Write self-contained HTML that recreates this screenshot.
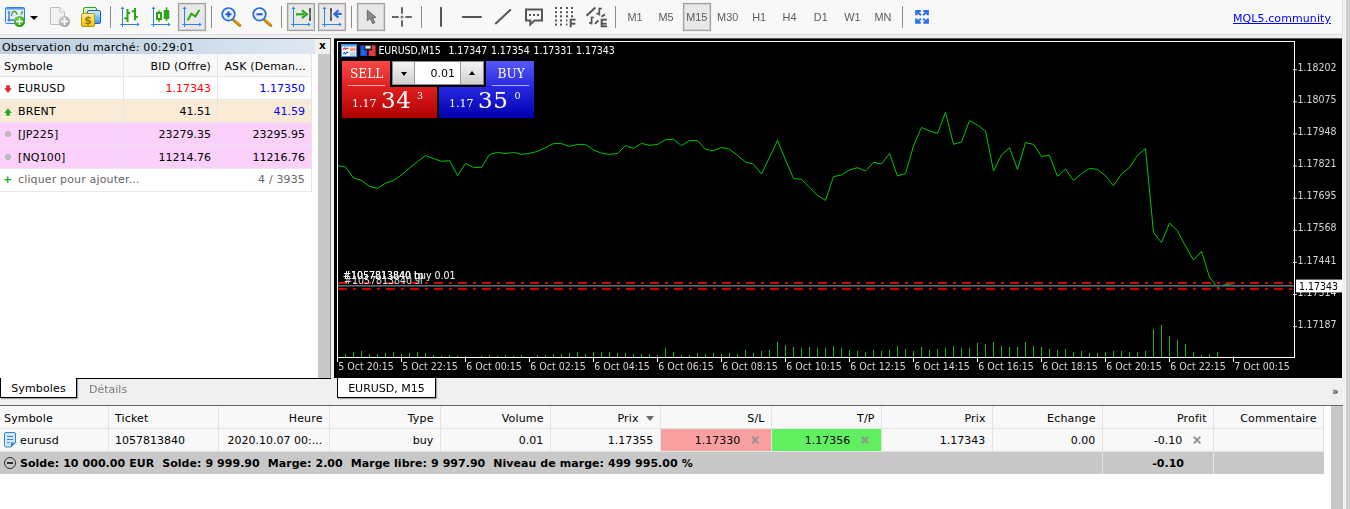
<!DOCTYPE html>
<html lang="fr"><head><meta charset="utf-8"><title>MetaTrader Web Terminal</title>
<style>
*{box-sizing:border-box;margin:0;padding:0}
html,body{width:1350px;height:509px;overflow:hidden}
body{position:relative;background:#f0f0f0;font-family:"DejaVu Sans","Liberation Sans",sans-serif;font-size:11px;color:#000;letter-spacing:.15px}
.abs{position:absolute}
#toolbar{left:0;top:0;width:1343px;height:35px;background:#f8f8f8;border-bottom:1px solid #dcdcdc;border-right:1px solid #dcdcdc}
#rstrip{left:1343px;top:0;width:7px;height:509px;background:linear-gradient(90deg,#f6f6f6,#f2f2f2 3px,#d6d3d0 3px,#d0d0d0 4px)}
#chart{position:absolute;left:334px;top:38px}
#mw{left:0;top:38px;width:331px;height:340px;background:#fff;border-top:1px solid #555;border-right:1px solid #888}
.sep{position:absolute;top:6px;width:1px;height:21px;background:#a0a0a0}
.tf{position:absolute;top:10px;font-family:"Liberation Sans",sans-serif;font-size:11.5px;color:#444;letter-spacing:0}
</style></head><body>
<div class="abs" id="toolbar"></div>
<svg class="abs" style="left:0;top:0;will-change:transform;letter-spacing:0" width="1342" height="34" viewBox="0 0 1342 34"><defs>
<radialGradient id="gp" cx=".4" cy=".3" r=".8"><stop offset="0" stop-color="#7ad84a"/><stop offset="1" stop-color="#1e8a0a"/></radialGradient>
<radialGradient id="gg" cx=".4" cy=".3" r=".8"><stop offset="0" stop-color="#d0d0d0"/><stop offset="1" stop-color="#a0a0a0"/></radialGradient>
<linearGradient id="gy" x1="0" y1="0" x2="0" y2="1"><stop offset="0" stop-color="#fdf0b0"/><stop offset=".6" stop-color="#ffd82a"/><stop offset="1" stop-color="#f0c000"/></linearGradient>
<linearGradient id="gb" x1="0" y1="0" x2="0" y2="1"><stop offset="0" stop-color="#d8f0ff"/><stop offset="1" stop-color="#28a0f0"/></linearGradient>
<linearGradient id="ggr" x1="0" y1="0" x2="0" y2="1"><stop offset="0" stop-color="#e8f8d8"/><stop offset="1" stop-color="#98d870"/></linearGradient>
<radialGradient id="gl" cx=".5" cy=".4" r=".7"><stop offset="0" stop-color="#fff"/><stop offset="1" stop-color="#cfe6fb"/></radialGradient>
<linearGradient id="gbar" x1="0" y1="0" x2="0" y2="1"><stop offset="0" stop-color="#444"/><stop offset=".5" stop-color="#777"/><stop offset="1" stop-color="#444"/></linearGradient>
</defs><rect x="178.5" y="3.5" width="27" height="27" fill="#e8e8e8" stroke="#a2a2a2" stroke-width="1.2"/><rect x="179.5" y="4.5" width="25" height="25" fill="none" stroke="#d0d0d0" stroke-width="1"/><rect x="287.5" y="3.5" width="27" height="27" fill="#e8e8e8" stroke="#a2a2a2" stroke-width="1.2"/><rect x="288.5" y="4.5" width="25" height="25" fill="none" stroke="#d0d0d0" stroke-width="1"/><rect x="318.5" y="3.5" width="27" height="27" fill="#e8e8e8" stroke="#a2a2a2" stroke-width="1.2"/><rect x="319.5" y="4.5" width="25" height="25" fill="none" stroke="#d0d0d0" stroke-width="1"/><rect x="357.5" y="3.5" width="27" height="27" fill="#e8e8e8" stroke="#a2a2a2" stroke-width="1.2"/><rect x="358.5" y="4.5" width="25" height="25" fill="none" stroke="#d0d0d0" stroke-width="1"/><rect x="683.5" y="3.5" width="27" height="27" fill="#e8e8e8" stroke="#a2a2a2" stroke-width="1.2"/><rect x="684.5" y="4.5" width="25" height="25" fill="none" stroke="#d0d0d0" stroke-width="1"/><rect x="110" y="6" width="1" height="22" fill="#8c8c8c"/><rect x="211" y="6" width="1" height="22" fill="#8c8c8c"/><rect x="281" y="6" width="1" height="22" fill="#8c8c8c"/><rect x="351" y="6" width="1" height="22" fill="#8c8c8c"/><rect x="421" y="6" width="1" height="22" fill="#8c8c8c"/><rect x="615" y="6" width="1" height="22" fill="#8c8c8c"/><rect x="902" y="6" width="1" height="22" fill="#8c8c8c"/><rect x="5.5" y="7.5" width="19" height="16" rx="1" fill="#e4eefa" stroke="#2f80ec"/><rect x="6" y="8" width="18" height="1.6" fill="#2f80ec" opacity=".75"/><path d="M9 12V21.5M7.5 20H14" stroke="#3a78d8" stroke-width="1.4" fill="none"/><path d="M9 10.8l1.6 2h-3.2z" fill="#3a78d8"/><path d="M11.5 16c.3-3.5 1.5-4.6 2.9-4.6 1.4 0 2.2 1.3 2.7 3.2M21 14.5c.8-1.2 1.2-2.2 1.5-3.5" stroke="#2aa514" stroke-width="1.2" fill="none"/><circle cx="19.5" cy="21.5" r="5.5" fill="url(#gp)"/><path d="M19.5 18v7M16 21.5h7" stroke="#fff" stroke-width="1.5"/><path d="M30 16h8l-4 4z" fill="#000"/><path d="M50.5 7.5h9.5l4.5 4.5v12.5h-14z" fill="#f2f2f2" stroke="#bcbcbc"/><path d="M60 7.5v4.5h4.5" fill="#fff" stroke="#bcbcbc"/><circle cx="64.5" cy="21.5" r="5.5" fill="url(#gg)"/><path d="M64.5 18v7M61 21.5h7" stroke="#fff" stroke-width="1.5"/><rect x="83.5" y="7.5" width="13" height="13" rx="1.5" fill="url(#ggr)" stroke="#28a828"/><rect x="87.5" y="10.5" width="13" height="13" rx="1.5" fill="url(#gb)" stroke="#1858c8"/><rect x="81.5" y="13.5" width="13" height="13" rx="1.5" fill="url(#gy)" stroke="#b89010"/><text x="88" y="24.3" text-anchor="middle" font-family="DejaVu Sans, Liberation Sans, sans-serif" font-weight="bold" font-size="11" fill="#9a7008">$</text><g stroke="#2f80ec" stroke-width="1" fill="#2f80ec"><path d="M122.5 8V27" fill="none"/><path d="M120.2 24.5H138.5" fill="none"/><path d="M122.5 6.5l2 2.6h-4z" stroke="none"/><path d="M139.7 24.5l-2.6 2v-4z" stroke="none"/></g><g stroke="#2aa514" stroke-width="2" fill="none"><path d="M127.5 9V22M127.5 13h2.7M127.5 18.2h-3.3M135 8V20.2M135 11.2h-3.2M135 17h2.8"/></g><g stroke="#2f80ec" stroke-width="1" fill="#2f80ec"><path d="M153.5 8V27" fill="none"/><path d="M151.2 24.5H169.5" fill="none"/><path d="M153.5 6.5l2 2.6h-4z" stroke="none"/><path d="M170.7 24.5l-2.6 2v-4z" stroke="none"/></g><rect x="157" y="13" width="4" height="6" fill="#fff" stroke="#2aa514" stroke-width="2"/><path d="M159 10.5V12M159 20v1.8" stroke="#2aa514" stroke-width="1.6"/><rect x="163.7" y="10" width="5.6" height="9" rx=".8" fill="#2aa514"/><path d="M166.5 7.3V21" stroke="#2aa514" stroke-width="1.6"/><g stroke="#2f80ec" stroke-width="1" fill="#2f80ec"><path d="M184.5 8V27" fill="none"/><path d="M182.2 24.5H200.5" fill="none"/><path d="M184.5 6.5l2 2.6h-4z" stroke="none"/><path d="M201.7 24.5l-2.6 2v-4z" stroke="none"/></g><path d="M187.7 20.3L191.5 13.8L195.3 16.6L199.3 10" stroke="#2aa514" stroke-width="2" fill="none"/><path d="M233.1 19.6L239.7 25.4" stroke="#b8860b" stroke-width="3.2" stroke-linecap="round"/><path d="M233.7 19.4L239.9 24.8" stroke="#e0b030" stroke-width="1"/><circle cx="228.5" cy="14.3" r="6.3" fill="url(#gl)" stroke="#2468e8" stroke-width="1.7"/><path d="M225.5 14.3h6" stroke="#1c50e0" stroke-width="2"/><path d="M228.5 11.3v6" stroke="#1c50e0" stroke-width="2"/><path d="M264.1 19.6L270.7 25.4" stroke="#b8860b" stroke-width="3.2" stroke-linecap="round"/><path d="M264.7 19.4L270.9 24.8" stroke="#e0b030" stroke-width="1"/><circle cx="259.5" cy="14.3" r="6.3" fill="url(#gl)" stroke="#2468e8" stroke-width="1.7"/><path d="M256.5 14.3h6" stroke="#1c50e0" stroke-width="2"/><g stroke="#2f80ec" stroke-width="1" fill="#2f80ec"><path d="M293.5 8V27" fill="none"/><path d="M291.2 24.5H309.5" fill="none"/><path d="M293.5 6.5l2 2.6h-4z" stroke="none"/><path d="M310.7 24.5l-2.6 2v-4z" stroke="none"/></g><path d="M296 14.3h8" stroke="#2aa514" stroke-width="2.2"/><path d="M302 10.4l4.8 3.9-4.8 3.9" stroke="#2aa514" stroke-width="2.2" fill="none"/><rect x="309" y="8" width="2" height="13" rx="1" fill="url(#gbar)"/><g stroke="#2f80ec" stroke-width="1" fill="#2f80ec"><path d="M324.5 8V27" fill="none"/><path d="M322.2 24.5H340.5" fill="none"/><path d="M324.5 6.5l2 2.6h-4z" stroke="none"/><path d="M341.7 24.5l-2.6 2v-4z" stroke="none"/></g><rect x="330" y="8" width="2" height="13" rx="1" fill="url(#gbar)"/><path d="M335.5 13.9h6.2" stroke="#2a68f0" stroke-width="2.2"/><path d="M338.4 10.2l-4 3.7 4 3.7" stroke="#2a68f0" stroke-width="2.2" fill="none"/><path d="M367.3 10V20.8L370.2 18.4L372.6 23.8L374.9 22.7L372.6 17.6L376 17.4z" fill="#8a8a8a" stroke="#5a5a5a" stroke-width=".8"/><g stroke="#666" stroke-width="2"><path d="M402 7.2v6.5M402 20.3v6.5M392 17h6.6M405.3 17h6.5"/></g><circle cx="402" cy="17" r="1.6" fill="#777"/><g stroke="#555" stroke-width="2" fill="none" stroke-linecap="round"><path d="M441 7.8V26"/><path d="M462.8 17H481"/><path d="M495.8 23.4L510.2 10"/></g><path d="M526 9.4h16v11.2h-7.5l-4.2 3.8v-3.8H526z" fill="none" stroke="#555" stroke-width="2"/><g fill="#555"><rect x="529" y="14" width="2" height="2"/><rect x="533" y="14" width="2" height="2"/><rect x="537" y="14" width="2" height="2"/></g><g fill="#555"><rect x="555" y="7.0" width="2" height="2"/><rect x="555" y="11.2" width="2" height="2"/><rect x="555" y="15.3" width="2" height="2"/><rect x="555" y="19.5" width="2" height="2"/><rect x="555" y="23.6" width="2" height="2"/><rect x="560" y="7.0" width="2" height="2"/><rect x="560" y="11.2" width="2" height="2"/><rect x="560" y="15.3" width="2" height="2"/><rect x="560" y="19.5" width="2" height="2"/><rect x="560" y="23.6" width="2" height="2"/><rect x="566" y="7.0" width="2" height="2"/><rect x="566" y="11.2" width="2" height="2"/><rect x="566" y="15.3" width="2" height="2"/><rect x="566" y="19.5" width="1.4" height="2"/><rect x="566" y="23.6" width="1.4" height="2"/><rect x="571" y="7.0" width="2" height="2"/><rect x="571" y="11.2" width="2" height="2"/><rect x="571" y="15.3" width="2" height="2"/></g><text x="569.3" y="26.7" font-family="Liberation Sans, sans-serif" font-weight="bold" font-size="10.5" fill="#555" stroke="#555" stroke-width=".4">F</text><g stroke="#555" stroke-width="2" fill="none"><path d="M586.5 15.7L595.4 7.4"/><path d="M594.9 23.9L598.4 20.4M601.5 16.8L604.9 14.4"/><path d="M599.3 7.7V15.4M598.6 8.6H601.8M600 13.7H596.4" stroke-width="1.7"/><path d="M591.6 16.5V24.5M590.9 17.5H593.8M592.3 22.8H589" stroke-width="1.7"/></g><text x="600.3" y="26.7" font-family="Liberation Sans, sans-serif" font-weight="bold" font-size="10.5" fill="#555" stroke="#555" stroke-width=".5">E</text><text x="635" y="20.8" text-anchor="middle" font-family="Liberation Sans, sans-serif" font-size="10.9" fill="#5c5c5c">M1</text><text x="666" y="20.8" text-anchor="middle" font-family="Liberation Sans, sans-serif" font-size="10.9" fill="#5c5c5c">M5</text><text x="696.8" y="20.8" text-anchor="middle" font-family="Liberation Sans, sans-serif" font-size="10.9" fill="#5c5c5c">M15</text><text x="727.7" y="20.8" text-anchor="middle" font-family="Liberation Sans, sans-serif" font-size="10.9" fill="#5c5c5c">M30</text><text x="759.2" y="20.8" text-anchor="middle" font-family="Liberation Sans, sans-serif" font-size="10.9" fill="#5c5c5c">H1</text><text x="789.5" y="20.8" text-anchor="middle" font-family="Liberation Sans, sans-serif" font-size="10.9" fill="#5c5c5c">H4</text><text x="820.8" y="20.8" text-anchor="middle" font-family="Liberation Sans, sans-serif" font-size="10.9" fill="#5c5c5c">D1</text><text x="852.5" y="20.8" text-anchor="middle" font-family="Liberation Sans, sans-serif" font-size="10.9" fill="#5c5c5c">W1</text><text x="883" y="20.8" text-anchor="middle" font-family="Liberation Sans, sans-serif" font-size="10.9" fill="#5c5c5c">MN</text><g fill="#2670f0"><path d="M915.2 10.1h5.6v2h-1.6l2.4 2.4l-1.4 1.4l-2.6 -2.6v2h-2.4z"/><path d="M928.9 10.1h-5.6v2h1.6l-2.4 2.4l1.4 1.4l2.6 -2.6v2h2.4z"/><path d="M915.2 23.7h5.6v-2h-1.6l2.4 -2.4l-1.4 -1.4l-2.6 2.6v-2h-2.4z"/><path d="M928.9 23.7h-5.6v-2h1.6l-2.4 -2.4l1.4 -1.4l2.6 2.6v-2h2.4z"/></g></svg><div class="abs" style="left:1233px;top:11px;line-height:15px;color:#00f;text-decoration:underline;font-size:11px;letter-spacing:.09px">MQL5.community</div>
<div class="abs" id="rstrip"></div>
<div class="abs" id="mw"><div class="abs" style="left:0;top:0;width:315px;height:15px;background:linear-gradient(90deg,#c2d2e3,#c6d6e6 40%,#dde8f3);line-height:17px;padding-left:2px;letter-spacing:.2px">Observation du marché: 00:29:01</div><div class="abs" style="left:315px;top:0;width:15px;height:15px;background:#f0f0f0;text-align:center;line-height:13px;font-weight:bold;font-size:10.5px;letter-spacing:0">x</div><div class="abs" style="left:0;top:15px;width:312px;height:23px;background:#f8f8f8;border-bottom:1px solid #e4e4e4"></div><div class="abs" style="left:4px;top:17px;line-height:22px">Symbole</div><div class="abs" style="left:123px;top:17px;width:88px;text-align:right;line-height:22px">BID (Offre)</div><div class="abs" style="left:217px;top:17px;width:89px;text-align:right;line-height:22px">ASK (Deman...</div><div class="abs" style="left:0;top:38px;width:312px;height:23px;background:#fff;border-bottom:1px solid #e8e8e8"></div><svg class="abs" style="left:4px;top:46px" width="8" height="8" viewBox="0 0 8 8"><path d="M2.2 0.3h3.6v2.9h2L4 7.9 0.2 3.2h2z" fill="#e62a32"/></svg><div class="abs" style="left:18px;top:39px;line-height:22px">EURUSD</div><div class="abs" style="left:123px;top:39px;width:88px;text-align:right;line-height:22px;letter-spacing:0;color:#f00">1.17343</div><div class="abs" style="left:217px;top:39px;width:88px;text-align:right;line-height:22px;letter-spacing:0;color:#00f">1.17350</div><div class="abs" style="left:0;top:61px;width:312px;height:23px;background:#faebd7;border-bottom:1px solid #e8e8e8"></div><svg class="abs" style="left:4px;top:69px" width="8" height="8" viewBox="0 0 8 8"><path d="M2.2 7.8h3.6V5h2L4 0.3 0.2 5h2z" fill="#22aa22"/></svg><div class="abs" style="left:18px;top:62px;line-height:22px">BRENT</div><div class="abs" style="left:123px;top:62px;width:88px;text-align:right;line-height:22px;letter-spacing:0;color:#000">41.51</div><div class="abs" style="left:217px;top:62px;width:88px;text-align:right;line-height:22px;letter-spacing:0;color:#00f">41.59</div><div class="abs" style="left:0;top:84px;width:312px;height:23px;background:#fbd0fb;border-bottom:1px solid #e8e8e8"></div><div class="abs" style="left:5px;top:92px;width:6px;height:6px;border-radius:3px;background:#c0c0c0;border:1px solid #aaa"></div><div class="abs" style="left:18px;top:85px;line-height:22px">[JP225]</div><div class="abs" style="left:123px;top:85px;width:88px;text-align:right;line-height:22px;letter-spacing:0;color:#000">23279.35</div><div class="abs" style="left:217px;top:85px;width:88px;text-align:right;line-height:22px;letter-spacing:0;color:#000">23295.95</div><div class="abs" style="left:0;top:107px;width:312px;height:23px;background:#fbd0fb;border-bottom:1px solid #e8e8e8"></div><div class="abs" style="left:5px;top:115px;width:6px;height:6px;border-radius:3px;background:#c0c0c0;border:1px solid #aaa"></div><div class="abs" style="left:18px;top:108px;line-height:22px">[NQ100]</div><div class="abs" style="left:123px;top:108px;width:88px;text-align:right;line-height:22px;letter-spacing:0;color:#000">11214.76</div><div class="abs" style="left:217px;top:108px;width:88px;text-align:right;line-height:22px;letter-spacing:0;color:#000">11216.76</div><div class="abs" style="left:0;top:130px;width:312px;height:23px;background:#fff;border-bottom:1px solid #e8e8e8"></div><div class="abs" style="left:3px;top:130px;line-height:22px;color:#2a2;font-weight:bold;font-size:11px;letter-spacing:0">+</div><div class="abs" style="left:18px;top:130.4px;line-height:22px;color:#666">cliquer pour ajouter...</div><div class="abs" style="left:217px;top:130.4px;width:88px;text-align:right;line-height:22px;color:#666">4 / 3935</div><div class="abs" style="left:123px;top:15px;width:1px;height:115px;background:#e4e4e4"></div><div class="abs" style="left:217px;top:15px;width:1px;height:115px;background:#e4e4e4"></div><div class="abs" style="left:311px;top:15px;width:1px;height:138px;background:#e4e4e4"></div><div class="abs" style="left:318px;top:15px;width:12px;height:324px;background:#c8c8c8"></div></div>
<svg id="chart" style="letter-spacing:0;will-change:transform" width="1008" height="340" viewBox="334 38 1008 340">
<rect x="334" y="38" width="1008" height="340" fill="#000"/><rect x="334" y="38" width="1008" height="1" fill="#5a5a5a"/>
<g fill="#20b820" shape-rendering="crispEdges"><rect x="345" y="353.6" width="1" height="3.4"/><rect x="353" y="352.0" width="1" height="5.0"/><rect x="361" y="350.6" width="1" height="6.4"/><rect x="369" y="353.6" width="1" height="3.4"/><rect x="377" y="353.6" width="1" height="3.4"/><rect x="385" y="352.6" width="1" height="4.4"/><rect x="393" y="351.6" width="1" height="5.4"/><rect x="401" y="353.6" width="1" height="3.4"/><rect x="409" y="352.6" width="1" height="4.4"/><rect x="417" y="351.6" width="1" height="5.4"/><rect x="425" y="352.6" width="1" height="4.4"/><rect x="433" y="354.6" width="1" height="2.4"/><rect x="441" y="355.6" width="1" height="1.4"/><rect x="449" y="354.6" width="1" height="2.4"/><rect x="457" y="355.6" width="1" height="1.4"/><rect x="465" y="355.6" width="1" height="1.4"/><rect x="481" y="355.6" width="1" height="1.4"/><rect x="489" y="354.6" width="1" height="2.4"/><rect x="497" y="355.6" width="1" height="1.4"/><rect x="505" y="354.6" width="1" height="2.4"/><rect x="513" y="355.6" width="1" height="1.4"/><rect x="521" y="354.6" width="1" height="2.4"/><rect x="537" y="354.6" width="1" height="2.4"/><rect x="545" y="354.6" width="1" height="2.4"/><rect x="553" y="353.6" width="1" height="3.4"/><rect x="561" y="353.6" width="1" height="3.4"/><rect x="569" y="352.6" width="1" height="4.4"/><rect x="577" y="351.6" width="1" height="5.4"/><rect x="585" y="353.6" width="1" height="3.4"/><rect x="593" y="351.6" width="1" height="5.4"/><rect x="601" y="351.6" width="1" height="5.4"/><rect x="609" y="351.6" width="1" height="5.4"/><rect x="617" y="352.6" width="1" height="4.4"/><rect x="625" y="352.6" width="1" height="4.4"/><rect x="633" y="353.6" width="1" height="3.4"/><rect x="641" y="353.6" width="1" height="3.4"/><rect x="649" y="353.6" width="1" height="3.4"/><rect x="657" y="354.6" width="1" height="2.4"/><rect x="665" y="347.6" width="1" height="9.4"/><rect x="673" y="351.6" width="1" height="5.4"/><rect x="681" y="354.6" width="1" height="2.4"/><rect x="689" y="355.0" width="1" height="2.0"/><rect x="697" y="352.6" width="1" height="4.4"/><rect x="705" y="353.6" width="1" height="3.4"/><rect x="713" y="352.6" width="1" height="4.4"/><rect x="721" y="353.6" width="1" height="3.4"/><rect x="729" y="352.6" width="1" height="4.4"/><rect x="737" y="353.6" width="1" height="3.4"/><rect x="745" y="350.0" width="1" height="7.0"/><rect x="753" y="352.6" width="1" height="4.4"/><rect x="761" y="350.6" width="1" height="6.4"/><rect x="769" y="350.0" width="1" height="7.0"/><rect x="777" y="341.6" width="1" height="15.4"/><rect x="785" y="344.6" width="1" height="12.4"/><rect x="793" y="346.6" width="1" height="10.4"/><rect x="801" y="347.6" width="1" height="9.4"/><rect x="809" y="346.6" width="1" height="10.4"/><rect x="817" y="347.6" width="1" height="9.4"/><rect x="825" y="347.6" width="1" height="9.4"/><rect x="833" y="345.6" width="1" height="11.4"/><rect x="841" y="347.6" width="1" height="9.4"/><rect x="849" y="350.0" width="1" height="7.0"/><rect x="857" y="351.0" width="1" height="6.0"/><rect x="865" y="351.6" width="1" height="5.4"/><rect x="873" y="350.0" width="1" height="7.0"/><rect x="881" y="351.0" width="1" height="6.0"/><rect x="889" y="350.0" width="1" height="7.0"/><rect x="897" y="345.6" width="1" height="11.4"/><rect x="905" y="349.0" width="1" height="8.0"/><rect x="913" y="351.0" width="1" height="6.0"/><rect x="921" y="346.6" width="1" height="10.4"/><rect x="929" y="350.0" width="1" height="7.0"/><rect x="937" y="348.6" width="1" height="8.4"/><rect x="945" y="347.6" width="1" height="9.4"/><rect x="953" y="345.6" width="1" height="11.4"/><rect x="961" y="347.6" width="1" height="9.4"/><rect x="969" y="347.6" width="1" height="9.4"/><rect x="977" y="342.6" width="1" height="14.4"/><rect x="985" y="343.6" width="1" height="13.4"/><rect x="993" y="341.6" width="1" height="15.4"/><rect x="1001" y="345.6" width="1" height="11.4"/><rect x="1009" y="346.6" width="1" height="10.4"/><rect x="1017" y="346.6" width="1" height="10.4"/><rect x="1025" y="341.6" width="1" height="15.4"/><rect x="1033" y="345.6" width="1" height="11.4"/><rect x="1041" y="346.6" width="1" height="10.4"/><rect x="1049" y="348.6" width="1" height="8.4"/><rect x="1057" y="350.0" width="1" height="7.0"/><rect x="1065" y="348.6" width="1" height="8.4"/><rect x="1073" y="351.6" width="1" height="5.4"/><rect x="1081" y="351.0" width="1" height="6.0"/><rect x="1089" y="352.6" width="1" height="4.4"/><rect x="1097" y="352.6" width="1" height="4.4"/><rect x="1105" y="351.6" width="1" height="5.4"/><rect x="1113" y="350.6" width="1" height="6.4"/><rect x="1121" y="350.6" width="1" height="6.4"/><rect x="1129" y="351.6" width="1" height="5.4"/><rect x="1137" y="351.6" width="1" height="5.4"/><rect x="1145" y="350.6" width="1" height="6.4"/><rect x="1153" y="328.6" width="1" height="28.4"/><rect x="1161" y="325.2" width="1" height="31.8"/><rect x="1169" y="335.6" width="1" height="21.4"/><rect x="1177" y="339.6" width="1" height="17.4"/><rect x="1185" y="343.6" width="1" height="13.4"/><rect x="1193" y="351.6" width="1" height="5.4"/><rect x="1201" y="354.6" width="1" height="2.4"/><rect x="1209" y="353.6" width="1" height="3.4"/><rect x="1217" y="351.6" width="1" height="5.4"/><rect x="1233" y="355.6" width="1" height="1.4"/></g>
<polyline points="337.5,165.6 345.5,167.0 353.5,178.0 361.5,180.4 369.5,186.4 377.5,188.4 385.5,183.2 393.5,180.4 401.5,175.0 409.5,168.0 417.5,161.6 425.5,155.6 433.5,158.4 441.5,161.4 449.5,160.6 457.5,175.6 465.5,163.4 473.5,167.4 481.5,167.4 489.5,154.6 497.5,152.4 505.5,153.6 513.5,152.4 521.5,154.4 529.5,153.4 537.5,151.4 545.5,147.6 553.5,143.6 561.5,143.6 569.5,146.4 577.5,144.4 585.5,144.4 593.5,150.0 601.5,153.2 609.5,154.4 617.5,153.4 625.5,145.6 633.5,148.4 641.5,143.4 649.5,145.4 657.5,144.4 665.5,139.6 673.5,139.4 681.5,145.6 689.5,140.6 697.5,140.6 705.5,149.4 713.5,150.6 721.5,147.4 729.5,149.4 737.5,155.4 745.5,162.0 753.5,164.4 761.5,174.0 769.5,157.4 777.5,140.4 785.5,160.0 793.5,178.4 801.5,179.4 809.5,187.4 817.5,195.4 825.5,200.4 833.5,176.6 841.5,175.0 849.5,170.0 857.5,167.6 865.5,171.0 873.5,162.4 881.5,164.0 889.5,153.6 897.5,176.0 905.5,173.4 913.5,146.0 921.5,127.4 929.5,131.0 937.5,133.4 945.5,112.4 953.5,144.4 961.5,142.0 969.5,120.6 977.5,125.0 985.5,131.0 993.5,171.0 1001.5,155.0 1009.5,147.6 1017.5,169.4 1025.5,142.6 1033.5,144.4 1041.5,156.4 1049.5,155.4 1057.5,176.4 1065.5,169.0 1073.5,180.6 1081.5,173.8 1089.5,168.4 1097.5,169.4 1105.5,175.8 1113.5,185.6 1121.5,174.0 1129.5,167.4 1137.5,155.4 1145.5,148.6 1153.5,232.4 1161.5,242.6 1169.5,223.0 1177.5,231.0 1185.5,246.0 1193.5,260.0 1201.5,251.4 1209.5,277.0 1217.5,287.6 1225.5,284.4 1233.5,285.4" fill="none" stroke="#00c800" stroke-width="1" stroke-linejoin="round"/>
<g stroke-width="2" fill="none">
<line x1="338" y1="283" x2="1294" y2="283" stroke="#c21400" stroke-dasharray="9 6 3 6"/>
<line x1="338" y1="289" x2="1294" y2="289" stroke="#cc0000" stroke-dasharray="9 6 3 6"/>
</g>
<rect x="338" y="285" width="956" height="1" fill="#5e6878"/><rect x="338" y="286" width="956" height="1" fill="#39414c"/>
<g fill="#fff" shape-rendering="crispEdges">
<rect x="337" y="41" width="958" height="1"/><rect x="337" y="357" width="958" height="1"/>
<rect x="337" y="41" width="1" height="317"/><rect x="1294" y="41" width="1" height="317"/>
<rect x="337" y="357" width="1" height="5"/><rect x="401" y="357" width="1" height="5"/><rect x="465" y="357" width="1" height="5"/><rect x="529" y="357" width="1" height="5"/><rect x="593" y="357" width="1" height="5"/><rect x="657" y="357" width="1" height="5"/><rect x="721" y="357" width="1" height="5"/><rect x="785" y="357" width="1" height="5"/><rect x="849" y="357" width="1" height="5"/><rect x="913" y="357" width="1" height="5"/><rect x="977" y="357" width="1" height="5"/><rect x="1041" y="357" width="1" height="5"/><rect x="1105" y="357" width="1" height="5"/><rect x="1169" y="357" width="1" height="5"/><rect x="1233" y="357" width="1" height="5"/></g>
<g font-family="DejaVu Sans Condensed, DejaVu Sans, Liberation Sans, sans-serif" font-size="10.5" fill="#d4d4d4"><text x="338.3" y="370.2">5 Oct 20:15</text><text x="402.3" y="370.2">5 Oct 22:15</text><text x="466.3" y="370.2">6 Oct 00:15</text><text x="530.3" y="370.2">6 Oct 02:15</text><text x="594.3" y="370.2">6 Oct 04:15</text><text x="658.3" y="370.2">6 Oct 06:15</text><text x="722.3" y="370.2">6 Oct 08:15</text><text x="786.3" y="370.2">6 Oct 10:15</text><text x="850.3" y="370.2">6 Oct 12:15</text><text x="914.3" y="370.2">6 Oct 14:15</text><text x="978.3" y="370.2">6 Oct 16:15</text><text x="1042.3" y="370.2">6 Oct 18:15</text><text x="1106.3" y="370.2">6 Oct 20:15</text><text x="1170.3" y="370.2">6 Oct 22:15</text><text x="1234.3" y="370.2">7 Oct 00:15</text><rect x="1293" y="69.20" width="4" height="1" fill="#ddd"/><text x="1297.4" y="70.70">1.18202</text><rect x="1293" y="101.32" width="4" height="1" fill="#ddd"/><text x="1297.4" y="102.85">1.18075</text><rect x="1293" y="133.44" width="4" height="1" fill="#ddd"/><text x="1297.4" y="135.00">1.17948</text><rect x="1293" y="165.56" width="4" height="1" fill="#ddd"/><text x="1297.4" y="167.15">1.17821</text><rect x="1293" y="197.68" width="4" height="1" fill="#ddd"/><text x="1297.4" y="199.30">1.17695</text><rect x="1293" y="229.80" width="4" height="1" fill="#ddd"/><text x="1297.4" y="231.45">1.17568</text><rect x="1293" y="261.92" width="4" height="1" fill="#ddd"/><text x="1297.4" y="263.60">1.17441</text><rect x="1293" y="294.04" width="4" height="1" fill="#ddd"/><text x="1297.4" y="295.75">1.17314</text><rect x="1293" y="326.16" width="4" height="1" fill="#ddd"/><text x="1297.4" y="327.90">1.17187</text>
<text x="343" y="278.5" fill="#fff">#1057813840 buy 0.01</text>
<text x="343" y="279" fill="#fff">#1057813840 tp</text>
<text x="344" y="284" fill="#e0e0e0">#1057813840 sl</text>
</g>
<rect x="1296" y="279.6" width="46" height="12.8" fill="#fff"/>
<text x="1299" y="289.9" font-family="DejaVu Sans Condensed, DejaVu Sans, Liberation Sans, sans-serif" font-size="10.5" fill="#000">1.17343</text>
</svg>
<div class="abs" id="oc" style="left:0;top:0"><div class="abs" style="left:342px;top:61px;width:95px;height:57px;background:linear-gradient(#f84848,#e02020 45%,#b00000);clip-path:polygon(0 0,48px 0,48px 26px,95px 26px,95px 57px,0 57px)"></div><div class="abs" style="left:439px;top:61px;width:95px;height:57px;background:linear-gradient(#5858f8,#2828e0 45%,#0000b0);clip-path:polygon(47px 0,95px 0,95px 57px,0 57px,0 26px,47px 26px)"></div><div style="font-family:'DejaVu Serif','Liberation Serif',serif;color:#fff;letter-spacing:0;position:absolute;white-space:pre;left:350px;top:65px;font-size:13.5px;line-height:17px;font-family:'DejaVu Serif Condensed','DejaVu Serif','Liberation Serif',serif">SELL</div><div style="font-family:'DejaVu Serif','Liberation Serif',serif;color:#fff;letter-spacing:0;position:absolute;white-space:pre;left:497.5px;top:65px;font-size:13.5px;line-height:17px;font-family:'DejaVu Serif Condensed','DejaVu Serif','Liberation Serif',serif">BUY</div><div class="abs" style="left:348px;top:85px;width:37px;height:1px;background:#f8b0b0"></div><div class="abs" style="left:492px;top:85px;width:37px;height:1px;background:#b0b0f8"></div><div style="font-family:'DejaVu Serif','Liberation Serif',serif;color:#fff;letter-spacing:0;position:absolute;white-space:pre;left:352px;top:96.5px;font-size:11px;line-height:14px">1.17</div><div style="font-family:'DejaVu Serif','Liberation Serif',serif;color:#fff;letter-spacing:0;position:absolute;white-space:pre;left:381px;top:85.5px;font-size:23px;line-height:28px;letter-spacing:.6px">34</div><div style="font-family:'DejaVu Serif','Liberation Serif',serif;color:#fff;letter-spacing:0;position:absolute;white-space:pre;left:417px;top:88.5px;font-size:9.5px;line-height:13px">3</div><div style="font-family:'DejaVu Serif','Liberation Serif',serif;color:#fff;letter-spacing:0;position:absolute;white-space:pre;left:449px;top:96.5px;font-size:11px;line-height:14px">1.17</div><div style="font-family:'DejaVu Serif','Liberation Serif',serif;color:#fff;letter-spacing:0;position:absolute;white-space:pre;left:478px;top:85.5px;font-size:23px;line-height:28px;letter-spacing:.6px">35</div><div style="font-family:'DejaVu Serif','Liberation Serif',serif;color:#fff;letter-spacing:0;position:absolute;white-space:pre;left:514.6px;top:88.5px;font-size:9.5px;line-height:13px">0</div><div class="abs" style="left:392px;top:61px;width:92px;height:24px;background:#fff;border:1px solid #888"></div><div class="abs" style="left:393px;top:62px;width:22px;height:22px;background:linear-gradient(#f4f4f4,#d0d0d0);border-right:1px solid #999"></div><div class="abs" style="left:460px;top:62px;width:23px;height:22px;background:linear-gradient(#f4f4f4,#d0d0d0);border-left:1px solid #999"></div><div class="abs" style="left:401px;top:71.5px;width:0;height:0;border-left:3.5px solid transparent;border-right:3.5px solid transparent;border-top:4px solid #000"></div><div class="abs" style="left:469px;top:70.5px;width:0;height:0;border-left:3.5px solid transparent;border-right:3.5px solid transparent;border-bottom:4px solid #000"></div><div class="abs" style="left:415px;top:63px;width:40px;height:22px;line-height:22px;text-align:right;font-size:11px;letter-spacing:0">0.01</div><div class="abs" style="left:378.4px;top:43px;line-height:14px;color:#fff;white-space:pre;letter-spacing:0;font-family:'DejaVu Sans Condensed','DejaVu Sans','Liberation Sans',sans-serif;font-size:10.5px;letter-spacing:-.05px;word-spacing:.9px">EURUSD,M15  1.17347 1.17354 1.17331 1.17343</div><svg class="abs" style="left:340px;top:43px" width="38" height="15" viewBox="340 43 38 15"><rect x="341.5" y="44.5" width="15" height="12" fill="#fff" stroke="#3a8de6"/><rect x="342" y="45" width="14" height="1.6" fill="#5aa5f0"/><path d="M343 49.6l1.4-1.8 1.2 1.6 1.2-1.2 1.6.4" stroke="#e83030" stroke-width="1.1" fill="none"/><path d="M343 54.2l1.4-1.6 1.2 1.4 1.4-2 1.4 1" stroke="#2060d0" stroke-width="1.1" fill="none"/><rect x="350" y="47.6" width="5.6" height="3.6" fill="#f8a080"/><rect x="350" y="52" width="5.6" height="4" fill="#b8d4f4"/><path d="M360.3 45.2h3.8v5h3.2v5.8h-7z" fill="#1a50e8"/><path d="M361.5 50h3v5h-3z" fill="#2a78e0" opacity=".7"/><path d="M375.6 45.2h-3.6v5h-3.4v5.8h7z" fill="#e43838"/><rect x="365" y="45.6" width="6" height="3.4" fill="#fff" stroke="#444" stroke-width="1.1"/></svg></div>
<div class="abs" style="left:0;top:378px;width:77px;height:20px;background:#fff;border:1px solid #000;border-top:none;box-shadow:1px 1px 1px rgba(0,0,0,.3);text-align:center;line-height:21px">Symboles</div><div class="abs" style="left:77px;top:378px;width:254px;height:1px;background:#000"></div><div class="abs" style="left:89px;top:380px;line-height:20px;color:#777;letter-spacing:0">Détails</div><div class="abs" style="left:337px;top:378px;width:99px;height:20px;background:#fff;border:1px solid #000;border-top:none;box-shadow:1px 1px 1px rgba(0,0,0,.3);text-align:center;line-height:21px;letter-spacing:0">EURUSD, M15</div><div class="abs" style="left:1332px;top:385px;line-height:14px;font-size:11px">»</div><div class="abs" style="left:0;top:405px;width:1343px;height:104px;background:#fff;border-top:1px solid #666;border-right:1px solid #999"></div><div class="abs" style="left:0;top:406px;width:1324px;height:23px;background:#f8f8f8;border-bottom:1px solid #e4e4e4"></div><div class="abs" style="left:0;top:429px;width:1324px;height:23px;background:#f8f8f8;border-bottom:1px solid #e4e4e4"></div><div class="abs" style="left:0;top:452px;width:1324px;height:22px;background:#c8c8c8"></div><div class="abs" style="left:661px;top:429px;width:110px;height:22px;background:#fba0a0"></div><div class="abs" style="left:772px;top:429px;width:110px;height:22px;background:#60f060"></div><div class="abs" style="left:108px;top:406px;width:1px;height:46px;background:#e4e4e4"></div><div class="abs" style="left:218px;top:406px;width:1px;height:46px;background:#e4e4e4"></div><div class="abs" style="left:329px;top:406px;width:1px;height:46px;background:#e4e4e4"></div><div class="abs" style="left:440px;top:406px;width:1px;height:46px;background:#e4e4e4"></div><div class="abs" style="left:550px;top:406px;width:1px;height:46px;background:#e4e4e4"></div><div class="abs" style="left:660px;top:406px;width:1px;height:46px;background:#e4e4e4"></div><div class="abs" style="left:771px;top:406px;width:1px;height:46px;background:#e4e4e4"></div><div class="abs" style="left:881px;top:406px;width:1px;height:46px;background:#e4e4e4"></div><div class="abs" style="left:992px;top:406px;width:1px;height:46px;background:#e4e4e4"></div><div class="abs" style="left:1102px;top:406px;width:1px;height:46px;background:#e4e4e4"></div><div class="abs" style="left:1213px;top:406px;width:1px;height:46px;background:#e4e4e4"></div><div class="abs" style="left:1323px;top:406px;width:1px;height:46px;background:#e4e4e4"></div><div class="abs" style="left:1102px;top:452px;width:1px;height:22px;background:#e4e4e4"></div><div class="abs" style="left:1213px;top:452px;width:1px;height:22px;background:#e4e4e4"></div><div class="abs" style="left:1331px;top:406px;width:12px;height:103px;background:#c8c8c8"></div><div class="abs" style="left:4px;top:407px;line-height:23px">Symbole</div><div class="abs" style="left:115px;top:407px;line-height:23px">Ticket</div><div class="abs" style="left:218px;top:407px;width:104.6px;text-align:right;line-height:23px">Heure</div><div class="abs" style="left:329px;top:407px;width:104.6px;text-align:right;line-height:23px">Type</div><div class="abs" style="left:440px;top:407px;width:103.6px;text-align:right;line-height:23px">Volume</div><div class="abs" style="left:550px;top:407px;width:88.6px;text-align:right;line-height:23px">Prix</div><div class="abs" style="left:660px;top:407px;width:104.6px;text-align:right;line-height:23px">S/L</div><div class="abs" style="left:771px;top:407px;width:103.6px;text-align:right;line-height:23px">T/P</div><div class="abs" style="left:881px;top:407px;width:104.6px;text-align:right;line-height:23px">Prix</div><div class="abs" style="left:992px;top:407px;width:103.6px;text-align:right;line-height:23px">Echange</div><div class="abs" style="left:1102px;top:407px;width:104.6px;text-align:right;line-height:23px">Profit</div><div class="abs" style="left:1213px;top:407px;width:103.6px;text-align:right;line-height:23px">Commentaire</div><div class="abs" style="left:646px;top:416px;width:0;height:0;border-left:4px solid transparent;border-right:4px solid transparent;border-top:5px solid #666"></div><div class="abs" style="left:20px;top:429px;line-height:23px">eurusd</div><div class="abs" style="left:115px;top:429px;line-height:23px;letter-spacing:0">1057813840</div><div class="abs" style="left:218px;top:429px;width:104.2px;text-align:right;line-height:23px;letter-spacing:0">2020.10.07 00:...</div><div class="abs" style="left:329px;top:429px;width:104.2px;text-align:right;line-height:23px;letter-spacing:0">buy</div><div class="abs" style="left:440px;top:429px;width:103.2px;text-align:right;line-height:23px;letter-spacing:0">0.01</div><div class="abs" style="left:550px;top:429px;width:103.2px;text-align:right;line-height:23px;letter-spacing:0">1.17355</div><div class="abs" style="left:660px;top:429px;width:80.2px;text-align:right;line-height:23px;letter-spacing:0">1.17330</div><div class="abs" style="left:771px;top:429px;width:79.2px;text-align:right;line-height:23px;letter-spacing:0">1.17356</div><div class="abs" style="left:881px;top:429px;width:104.2px;text-align:right;line-height:23px;letter-spacing:0">1.17343</div><div class="abs" style="left:992px;top:429px;width:103.2px;text-align:right;line-height:23px;letter-spacing:0">0.00</div><div class="abs" style="left:1102px;top:429px;width:80.2px;text-align:right;line-height:23px;letter-spacing:0">-0.10</div><div class="abs" style="left:1213px;top:429px;width:103.2px;text-align:right;line-height:23px;letter-spacing:0"></div><div class="abs" style="left:750px;top:429px;width:10px;text-align:center;line-height:22px;color:#949494;font-weight:bold;font-size:12px;letter-spacing:0;-webkit-text-stroke:.5px #949494">×</div><div class="abs" style="left:860px;top:429px;width:10px;text-align:center;line-height:22px;color:#949494;font-weight:bold;font-size:12px;letter-spacing:0;-webkit-text-stroke:.5px #949494">×</div><div class="abs" style="left:1192px;top:429px;width:10px;text-align:center;line-height:22px;color:#949494;font-weight:bold;font-size:12px;letter-spacing:0;-webkit-text-stroke:.5px #949494">×</div><svg class="abs" style="left:4px;top:432px" width="12" height="16" viewBox="0 0 12 16"><path d="M2 0.5h8a1.5 1.5 0 0 1 1.500 1.500v8.500l-4.500 4.500h-5a1.500 1.500 0 0 1-1.500-1.500v-11.500a1.500 1.500 0 0 1 1.500-1.500z" fill="#d4e8fb" stroke="#2a86de"/><path d="M7 15v-4.500h4.500z" fill="#2a86de"/><path d="M3 4.500h6M3 7.500h6M3 10.500h2.500" stroke="#2a86de" stroke-width="1.200"/></svg><div class="abs" style="left:4px;top:457px;width:11.500px;height:11.500px;border:1.500px solid #2c2c2c;border-radius:6px"></div><div class="abs" style="left:6.700px;top:461.800px;width:6px;height:2px;background:#2c2c2c"></div><div class="abs" style="left:20px;top:452px;line-height:23px;font-weight:bold;white-space:pre;letter-spacing:.02px;word-spacing:.2px">Solde: 10 000.00 EUR  Solde: 9 999.90  Marge: 2.00  Marge libre: 9 997.90  Niveau de marge: 499 995.00 %</div><div class="abs" style="left:1102px;top:452px;width:82px;text-align:right;line-height:23.5px;font-weight:bold;letter-spacing:0">-0.10</div>
</body></html>
